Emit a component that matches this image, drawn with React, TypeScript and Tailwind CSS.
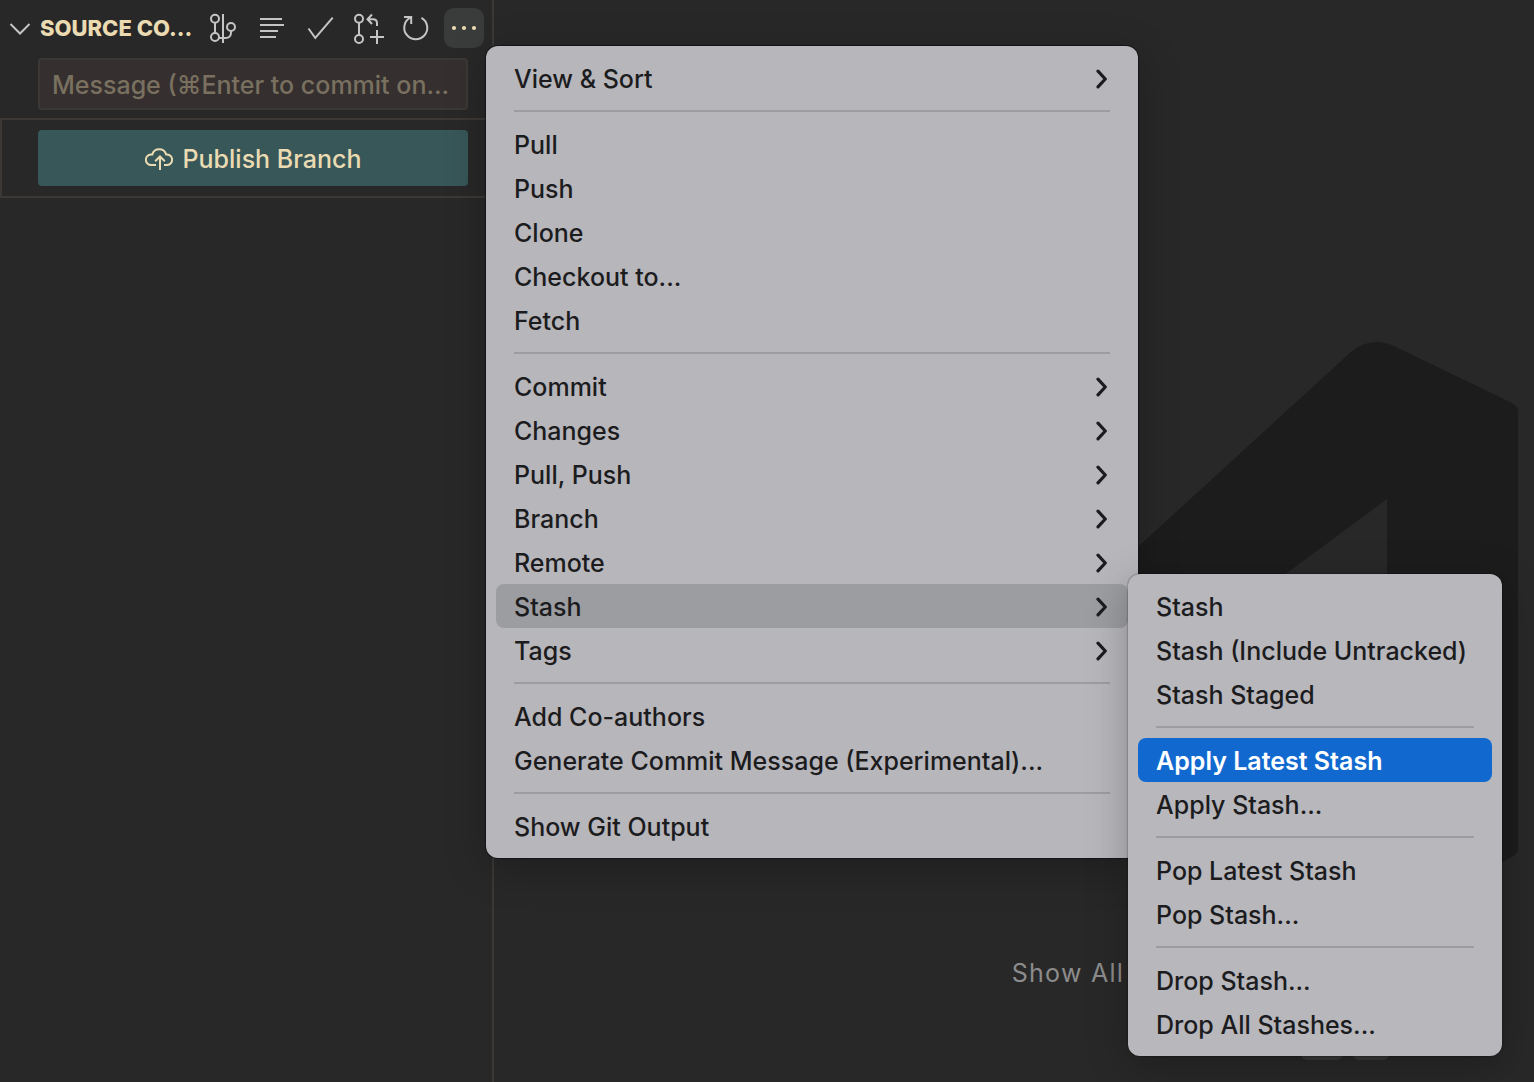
import React from "react";

type Entry = { label: string; submenu?: boolean; state?: "open" | "active" } | "separator";

const mainMenu: Entry[] = [
  { label: "View & Sort", submenu: true },
  "separator",
  { label: "Pull" },
  { label: "Push" },
  { label: "Clone" },
  { label: "Checkout to..." },
  { label: "Fetch" },
  "separator",
  { label: "Commit", submenu: true },
  { label: "Changes", submenu: true },
  { label: "Pull, Push", submenu: true },
  { label: "Branch", submenu: true },
  { label: "Remote", submenu: true },
  { label: "Stash", submenu: true, state: "open" },
  { label: "Tags", submenu: true },
  "separator",
  { label: "Add Co-authors" },
  { label: "Generate Commit Message (Experimental)..." },
  "separator",
  { label: "Show Git Output" },
];

const stashMenu: Entry[] = [
  { label: "Stash" },
  { label: "Stash (Include Untracked)" },
  { label: "Stash Staged" },
  "separator",
  { label: "Apply Latest Stash", state: "active" },
  { label: "Apply Stash..." },
  "separator",
  { label: "Pop Latest Stash" },
  { label: "Pop Stash..." },
  "separator",
  { label: "Drop Stash..." },
  { label: "Drop All Stashes..." },
];

function MenuItems({ entries }: { entries: Entry[] }) {
  return (
    <>
      {entries.map((entry, i) => {
        if (entry === "separator") {
          return (
            <div key={i} role="separator" className="flex h-[22px] items-center px-[18px]">
              <div className="h-0.5 w-full bg-[#9d9ca1]" />
            </div>
          );
        }
        const tone =
          entry.state === "open"
            ? "bg-[#9c9da0] font-medium text-[#1c1c1e]"
            : entry.state === "active"
              ? "bg-[#1169d0] font-semibold text-white"
              : "font-medium text-[#1c1c1e]";
        return (
          <button
            key={i}
            type="button"
            role="menuitem"
            className={`flex h-11 w-full items-center justify-between rounded-lg px-[18px] pt-0.5 text-left whitespace-nowrap ${tone}`}
          >
            <span className="pt-0.5">{entry.label}</span>
            {entry.submenu && (
              <svg width="16" height="20" viewBox="0 0 16 20" fill="none" stroke="currentColor" strokeWidth="3.200" strokeLinecap="round" strokeLinejoin="round" aria-hidden="true">
                <path d="M4 2.200 11.300 10 4 17.800" />
              </svg>
            )}
          </button>
        );
      })}
    </>
  );
}

function ToolButton({ label, active, children }: { label: string; active?: boolean; children: React.ReactNode }) {
  return (
    <button
      type="button"
      aria-label={label}
      className={`flex size-10 shrink-0 items-center justify-center rounded-[10px] ${active ? "bg-[#3a3b3b] text-[#ebdbb2]" : "text-[#c5c5c5]"}`}
    >
      <svg width="32" height="32" viewBox="0 0 32 32" fill="none" stroke="currentColor" strokeWidth="2" aria-hidden="true">
        {children}
      </svg>
    </button>
  );
}

function Toolbar() {
  return (
    <div className="flex gap-2">
      <ToolButton label="View Git Graph">
        <circle cx="7" cy="6.700" r="4" />
        <circle cx="7" cy="25" r="4" />
        <circle cx="23" cy="15" r="4" />
        <path d="M7 11v10M15 2v29M23 19v1.500c0 3.800-2 5.500-5.500 5.500H11" />
      </ToolButton>
      <ToolButton label="View as Tree">
        <path d="M4 7h22M4 13h24M4 19h18M4 25h16" />
      </ToolButton>
      <ToolButton label="Commit">
        <path d="M4.500 16.500 11.300 26 28.700 5.700" />
      </ToolButton>
      <ToolButton label="Create Pull Request">
        <circle cx="7" cy="6.700" r="4" />
        <circle cx="7" cy="27" r="4" />
        <path d="M7 11v12M20 2.500 15.500 7.200 20 12M15.500 7.200H21c2.800 0 4 1.500 4 4V14M25 18v14M18 25h14" />
      </ToolButton>
      <ToolButton label="Refresh">
        <path d="M4 5h7.200v7M11.200 5.200A11.500 11.500 0 1 0 21.500 5.800" />
      </ToolButton>
      <ToolButton label="More Actions" active>
        <g fill="currentColor" stroke="none">
          <circle cx="6" cy="16" r="2.100" />
          <circle cx="16" cy="16" r="2.100" />
          <circle cx="26" cy="16" r="2.100" />
        </g>
      </ToolButton>
    </div>
  );
}

function Sidebar() {
  return (
    <aside className="w-[494px] shrink-0 border-r-2 border-[#3c3836]">
      <header className="flex h-14 items-center justify-between px-2">
        <button type="button" className="flex items-center gap-2 text-[22px] font-extrabold whitespace-nowrap text-[#ebdbb2]">
          <svg width="24" height="24" viewBox="0 0 24 24" fill="none" stroke="#c5c5c5" strokeWidth="2" aria-hidden="true">
            <path d="M2.500 8 12 17.500 21.500 8" />
          </svg>
          SOURCE CO...
        </button>
        <Toolbar />
      </header>
      <div className="pt-0.5 pr-6 pb-2 pl-[38px]">
        <input
          aria-label="Commit message"
          placeholder="Message (⌘Enter to commit on..."
          className="block h-[52px] w-full rounded-sm border-2 border-[#3c3836] bg-[#35302f] px-3 pt-0.5 text-[25px] font-medium text-[#ebdbb2] outline-none placeholder:text-[#7a7060]"
        />
      </div>
      <div className="border-2 border-r-0 border-[#3c3836] py-2.5 pr-6 pl-9">
        <button type="button" className="flex h-14 w-full items-center justify-center gap-2.5 rounded-sm bg-[#385759] pt-0.5 text-[25px] font-medium text-[#ebdbb2]">
          <svg width="28" height="24" viewBox="0 0 28 24" fill="none" stroke="currentColor" strokeWidth="2" aria-hidden="true">
            <path d="M11 18H6.500a5.300 5.300 0 0 1-.6-10.600h1.400a7.200 7.200 0 0 1 13.800 0h1a5.300 5.300 0 0 1-.6 10.600H19M15 23V10M10.200 14.300 15 9.500l4.800 4.800" />
          </svg>
          <span className="pt-0.5">Publish Branch</span>
        </button>
      </div>
    </aside>
  );
}

function Watermark() {
  return (
    <main className="flex min-w-0 flex-1 flex-col items-end overflow-hidden pt-[342px]">
      <svg className="mr-4 size-[576px] shrink-0" viewBox="0 0 576 576" fill="#1c1c1c" aria-hidden="true">
        <path
          fillRule="evenodd"
          d="M409 10Q421 0 434 0Q444 0 454 5L570 61Q576 64 576 70V506Q576 512 570 515L454 571Q429 583 409 566L174 351 72 429Q62 436 53 428L20 398Q9 388 20 378L108 288 20 198Q9 188 20 178L53 148Q62 140 72 147L174 225ZM445 157 268 288 445 419Z"
        />
      </svg>
      <div className="mt-9 mr-[410px] text-[25px] leading-[38px] tracking-wider text-[#8c8c8c]">Show All</div>
      <div className="mt-7 mr-[145px] flex gap-2.5">
        <div className="h-10 w-[42px] rounded-md bg-[#393939]" />
        <div className="h-10 w-9 rounded-md bg-[#393939]" />
      </div>
    </main>
  );
}

export default function App() {
  return (
    <div className="relative flex h-screen overflow-hidden bg-[#282828] font-['Inter',sans-serif]">
      <Sidebar />
      <Watermark />
      <div
        role="menu"
        aria-label="More Actions"
        className="absolute top-[46px] left-[486px] w-[652px] rounded-xl bg-[#b7b6bb] p-2.5 text-[25px] shadow-[0_0_1px_1px_#161616,0_10px_40px_rgba(0,0,0,0.25)]"
      >
        <MenuItems entries={mainMenu} />
      </div>
      <div
        role="menu"
        aria-label="Stash"
        className="absolute top-[574px] left-[1128px] w-[374px] rounded-xl bg-[#b7b7bc] p-2.5 text-[25px] shadow-[0_0_2px_rgba(0,0,0,0.6),0_10px_40px_rgba(0,0,0,0.25)]"
      >
        <MenuItems entries={stashMenu} />
      </div>
    </div>
  );
}
